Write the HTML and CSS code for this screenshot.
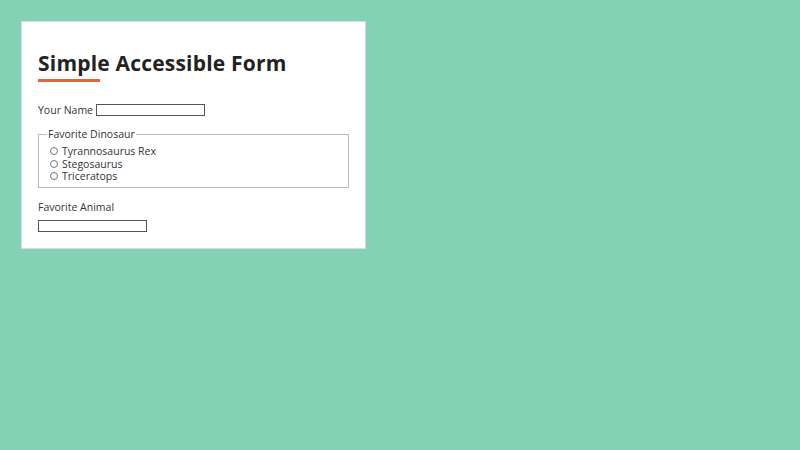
FILE: index.html
```html
<!DOCTYPE html>
<html lang="en">
<head>
    <meta charset="UTF-8">
    <meta name="viewport" content="width=device-width, initial-scale=1.0">
    <title>Simple Accessible Form</title>
    <link rel="stylesheet" href="styles.css">
</head>
<body>
    <div class="card">
        <h1 class="title">Simple Accessible Form</h1>
        <form class="form">
            <div class="row">
                <label for="name">Your Name</label>
                <input type="text" id="name" name="name" class="text-input">
            </div>
            <fieldset class="group">
                <legend>Favorite Dinosaur</legend>
                <label class="option"><input type="radio" name="dino" value="trex"> Tyrannosaurus Rex</label>
                <label class="option"><input type="radio" name="dino" value="stego"> Stegosaurus</label>
                <label class="option"><input type="radio" name="dino" value="tri"> Triceratops</label>
            </fieldset>
            <div class="stack">
                <label for="animal">Favorite Animal</label>
                <input type="text" id="animal" name="animal" class="text-input">
            </div>
        </form>
    </div>
</body>
</html>
```

FILE: styles.css
```css
body {
    margin: 0;
    padding: 21px;
    background-color: #83d2b5;
    font-family: "Open Sans", Arial, sans-serif;
    color: #333;
}
.card {
    width: 311px;
    background: #fff;
    border: 1px solid #d6ddd9;
    padding: 16px 16px 16px 16px;
}
.title {
    font-size: 21px;
    font-weight: bold;
    color: #222;
    margin: 12px 0 0 0;
    line-height: 26px;
    letter-spacing: 0.2px;
}
.title::after {
    content: "";
    display: block;
    width: 62px;
    height: 3px;
    background: #e8613f;
    margin-top: 3px;
}
.form {
    font-size: 10.5px;
    margin-top: 21px;
}
.row {
    display: flex;
    align-items: center;
    gap: 3px;
}
.text-input {
    width: 105px;
    height: 8px;
    padding: 1px;
    border: 1px solid #555;
    margin: 0;
}
.group {
    margin: 10px 0 0 0;
    padding: 4px 0 4px 8px;
    border: 1px solid #bbb;
    display: flex;
    flex-direction: column;
}
.group legend {
    padding: 0 1px;
}
.option {
    display: flex;
    align-items: center;
    gap: 4px;
    height: 12.5px;
    line-height: 12.5px;
    margin-left: 3px;
}
.option input {
    width: 8px;
    height: 8px;
    margin: 0;
}
.stack {
    display: flex;
    flex-direction: column;
    gap: 6px;
    margin-top: 12px;
}
```
